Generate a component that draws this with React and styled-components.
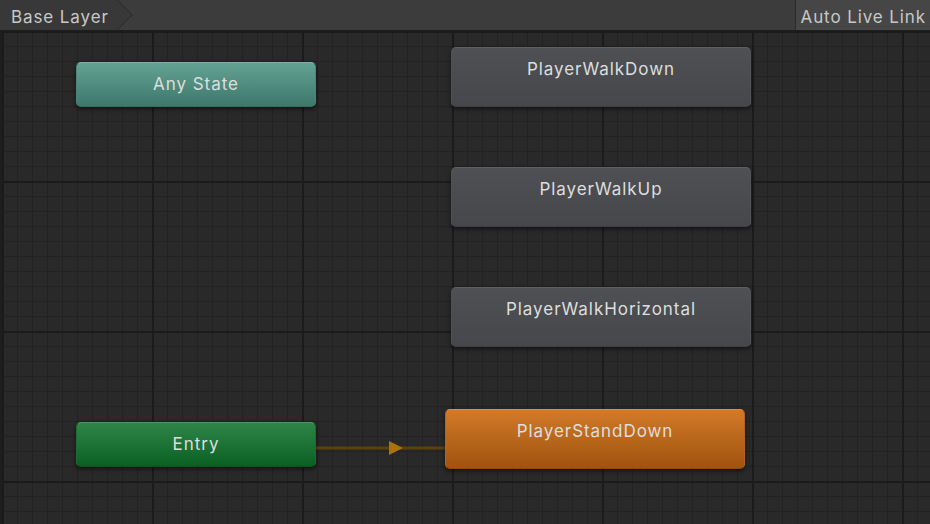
import React from "react";
import styled, { createGlobalStyle, css } from "styled-components";

const GlobalStyle = createGlobalStyle`
  html, body {
    margin: 0;
    padding: 0;
    background: #282828;
    overflow: hidden;
  }
  body {
    font-family: Inter, "Noto Sans", "Liberation Sans", sans-serif;
  }
`;

const Window = styled.div`
  width: 930px;
  height: 524px;
  display: flex;
  flex-direction: column;
  background: #282828;
`;

const Toolbar = styled.div`
  height: 30px;
  flex: 0 0 30px;
  display: flex;
  align-items: stretch;
  background: #3c3c3c;
  border-bottom: 1px solid #1e1e1e;
`;

const CrumbOutline = styled.div`
  display: flex;
  background: #2a2a2a;
  padding: 0 1px 0 0;
  clip-path: polygon(0 0, calc(100% - 15px) 0, 100% 50%, calc(100% - 15px) 100%, 0 100%);
`;

const Crumb = styled.div`
  display: flex;
  align-items: center;
  padding: 3px 23px 0 11px;
  background: #383838;
  color: #c8c8c8;
  font-size: 17px;
  letter-spacing: 0.9px;
  clip-path: polygon(0 0, calc(100% - 15px) 0, 100% 50%, calc(100% - 15px) 100%, 0 100%);
`;

const Spacer = styled.div`
  flex: 1;
`;

const ToolButton = styled.div`
  display: flex;
  align-items: center;
  padding: 3px 4px 0 5px;
  background: #464646;
  border-left: 1px solid #2a2a2a;
  color: #c8c8c8;
  font-size: 17px;
  letter-spacing: 0.9px;
`;

const Canvas = styled.div`
  position: relative;
  flex: 1;
  background-color: #292929;
  border-left: 2px solid #1e1e1e;
  background-image:
    linear-gradient(to right, #1b1b1b 2px, transparent 2px),
    linear-gradient(to bottom, #1b1b1b 2px, transparent 2px),
    linear-gradient(to right, #222222 1px, transparent 1px),
    linear-gradient(to bottom, #222222 1px, transparent 1px);
  background-size: 150px 150px, 150px 150px, 15px 15px, 15px 15px;
  background-position: 0 0, 0 0, 0 0, 0 0;
`;

const palettes = {
  any: css`
    background: linear-gradient(to bottom, #63a293, #3d786b);
    border-color: #78b3a5 #4a8577 #376e62;
  `,
  entry: css`
    background: linear-gradient(to bottom, #2f8547, #0b5f23);
    border-color: #48985d #1c6c33 #0a5420;
  `,
  state: css`
    background: linear-gradient(to bottom, #4e5054, #45474a);
    border-color: #5e6064 #505256 #3e4043;
  `,
  default: css`
    background: linear-gradient(to bottom, #d27a28, #a0530f);
    border-color: #e08e44 #b86420 #8f4a0c;
  `,
};

const Node = styled.div`
  position: absolute;
  box-sizing: border-box;
  border: 1px solid;
  border-radius: 5px;
  box-shadow: 0 2px 4px rgba(0, 0, 0, 0.55);
  color: #dedede;
  font-size: 17px;
  letter-spacing: 0.95px;
  line-height: 20px;
  padding-top: 11px;
  text-align: center;
  ${(p) => palettes[p.$kind]}
`;

const Transitions = styled.svg`
  position: absolute;
  left: 0;
  top: 0;
  overflow: visible;
`;

const nodes = [
  { name: "Any State", kind: "any", x: 74, y: 31, w: 240, h: 45 },
  { name: "Entry", kind: "entry", x: 74, y: 391, w: 240, h: 45 },
  { name: "PlayerWalkDown", kind: "state", x: 449, y: 16, w: 300, h: 60 },
  { name: "PlayerWalkUp", kind: "state", x: 449, y: 136, w: 300, h: 60 },
  { name: "PlayerWalkHorizontal", kind: "state", x: 449, y: 256, w: 300, h: 60 },
  { name: "PlayerStandDown", kind: "default", x: 443, y: 378, w: 300, h: 60 },
];

const App = () => {
  return (
    <>
      <GlobalStyle />
      <Window>
        <Toolbar>
          <CrumbOutline>
            <Crumb>Base Layer</Crumb>
          </CrumbOutline>
          <Spacer />
          <ToolButton>Auto Live Link</ToolButton>
        </Toolbar>
        <Canvas>
          <Transitions width="928" height="493">
            <line x1="312" y1="417" x2="444" y2="417" stroke="#5c410c" strokeWidth="3" />
            <polygon points="387,410 387,424 401,417" fill="#a87309" />
          </Transitions>
          {nodes.map((n) => (
            <Node
              key={n.name}
              $kind={n.kind}
              style={{ left: n.x, top: n.y, width: n.w, height: n.h }}
            >
              {n.name}
            </Node>
          ))}
        </Canvas>
      </Window>
    </>
  );
};

export default App;
